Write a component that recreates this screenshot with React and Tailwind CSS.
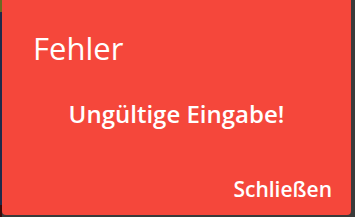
export default function App() {
  return (
    <div className="w-[355px] h-[217px] bg-[#3a3a3a] flex overflow-hidden" style={{ fontFamily: '"Open Sans", "Noto Sans", sans-serif' }}>
      <div className="w-[2px] h-full flex flex-col">
        <div className="h-[12px] bg-[#6a6a22]"></div>
        <div className="flex-1 bg-[#1f2a4a]"></div>
        <div className="h-[12px] bg-[#3a0a0a]"></div>
      </div>
      <div className="w-[349px] h-[215px] bg-[#f5473b] rounded-b-[4px] flex flex-col text-white">
        <div className="pl-[31px] pt-[28px] text-[31px] leading-[40px] font-normal">Fehler</div>
        <div className="mt-[30px] text-center text-[24px] leading-[32px] font-semibold">Ungültige Eingabe!</div>
        <div className="mt-auto mb-[12px] self-end pr-[19px] text-[21px] leading-[28px] font-semibold">Schließen</div>
      </div>
    </div>
  );
}
